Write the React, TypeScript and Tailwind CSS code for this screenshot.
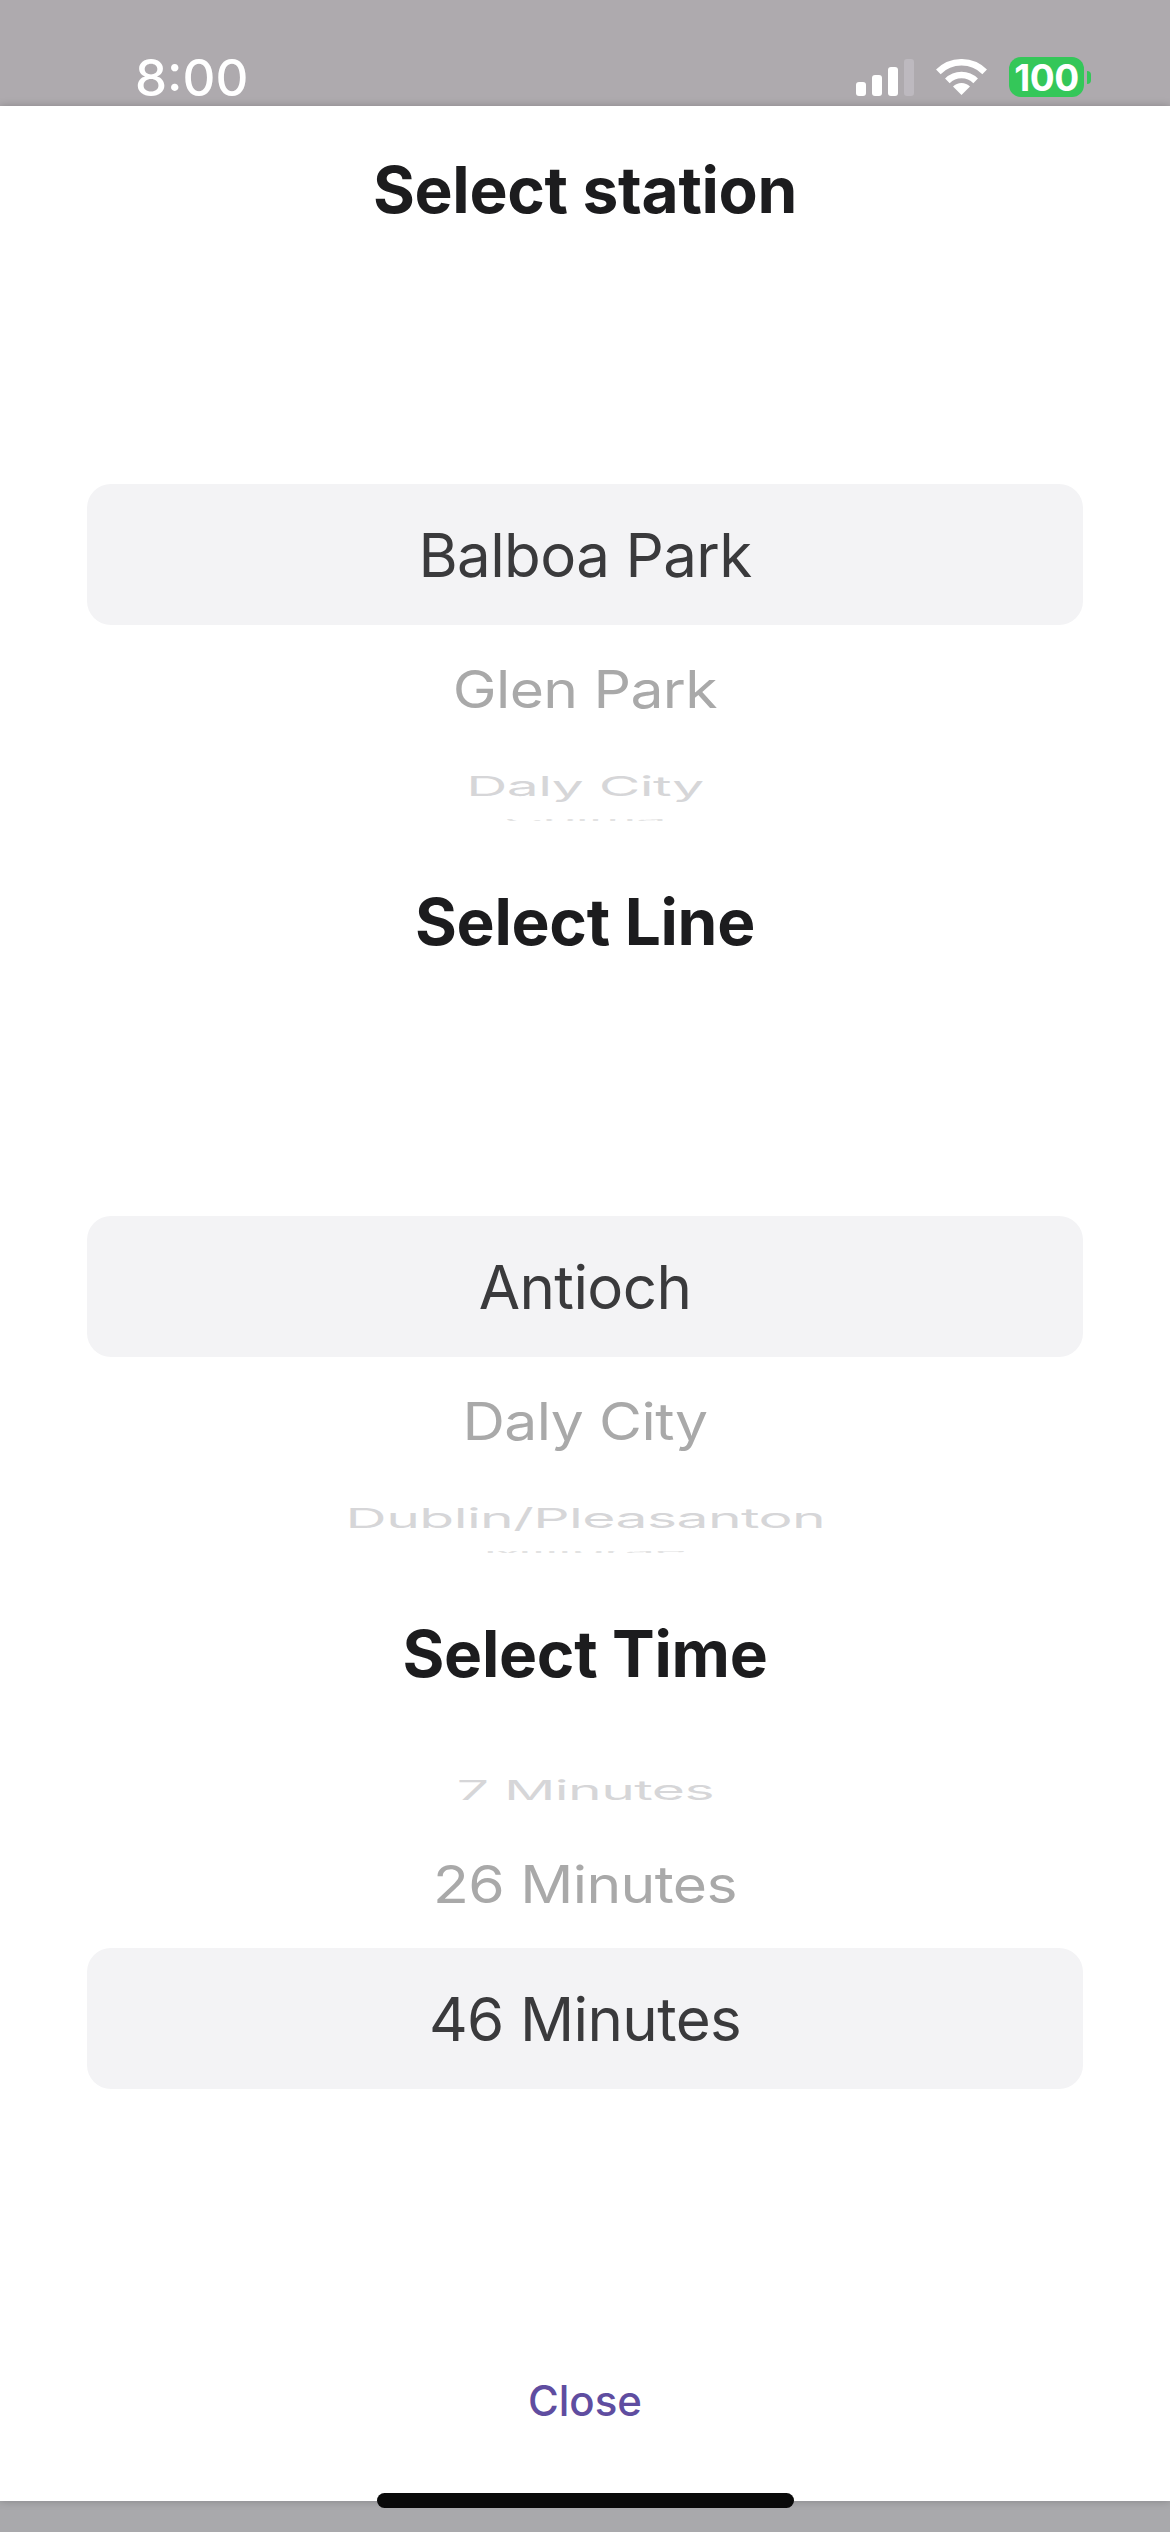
import React from "react";

function Row({ text, size, tall = true }: { text: string; size: 1 | 2; tall?: boolean }) {
  return (
    <div
      className={
        size === 1
          ? "h-[128px] flex items-center justify-center shrink-0"
          : tall
            ? "h-[66px] flex items-center justify-center shrink-0"
            : "h-[60px] flex items-center justify-center shrink-0"
      }
    >
      <span
        className={
          size === 1
            ? "inline-block text-[60px] leading-none tracking-[-0.6px] text-[#a9a9a9] scale-x-[0.98] scale-y-[0.86]"
            : "inline-block text-[60px] leading-none tracking-[-0.6px] text-[#d6d6d8] scale-x-[0.95] scale-y-[0.46]"
        }
      >
        {text}
      </span>
    </div>
  );
}

function Sliver({ text }: { text: string }) {
  return (
    <div className="h-[2px] overflow-hidden flex justify-center shrink-0">
      <span className="inline-block text-[60px] leading-[60px] h-[60px] text-[#e2e2e2] -mt-[30px] scale-x-[0.9] scale-y-[0.12]">{text}</span>
    </div>
  );
}

function Picker({
  title,
  selected,
  above = [],
  below = [],
  sliver,
}: {
  title: string;
  selected: string;
  above?: string[];
  below?: string[];
  sliver?: string;
}) {
  return (
    <section className="h-[732px] shrink-0 flex flex-col">
      <h2 className="h-[168px] flex items-center justify-center text-[64px] leading-none font-bold tracking-[-0.3px] text-[#1c1c1e]">
        {title}
      </h2>
      <div className="mt-[14px] h-[534px] px-[87px] flex flex-col overflow-hidden">
        <div className="h-[196px] shrink-0 flex flex-col justify-end">
          {above[1] && <Row text={above[1]} size={2} tall={false} />}
          {above[0] && <Row text={above[0]} size={1} />}
        </div>
        <div className="h-[141px] shrink-0 rounded-[24px] bg-[#f3f3f5] flex items-center justify-center text-[60px] leading-none tracking-[-0.6px] text-[#3a3a3c]">
          {selected}
        </div>
        <div className="flex flex-col">
          {below[0] && <Row text={below[0]} size={1} />}
          {below[1] && <Row text={below[1]} size={2} />}
          {sliver && <Sliver text={sliver} />}
        </div>
      </div>
    </section>
  );
}

export default function App() {
  return (
    <div className="relative w-[1170px] h-[2532px] overflow-hidden flex flex-col bg-[#a9a9ac] font-['Inter','Liberation_Sans',sans-serif]">
      <header className="h-[106px] shrink-0 bg-[#aeaaae] flex items-end pl-[135px] pr-[79px] pb-[9px] text-white">
        <span className="text-[51px] leading-[38px] font-medium">8:00</span>
        <div className="ml-auto flex items-end">
          <div className="flex items-end gap-[6px] mb-[1px]">
            <div className="w-[10px] h-[14px] rounded-[3px] bg-white" />
            <div className="w-[10px] h-[21px] rounded-[3px] bg-white" />
            <div className="w-[10px] h-[29px] rounded-[3px] bg-white" />
            <div className="w-[10px] h-[37px] rounded-[3px] bg-[#bdb9bf]" />
          </div>
          <svg className="ml-[22px] mb-[1px]" width="51" height="37" viewBox="0 0 51 37" fill="none">
            <path d="M2.34 12.84A32.75 32.75 0 0 1 48.66 12.84" stroke="#fff" strokeWidth="6.5" />
            <path d="M11.36 21.86A20 20 0 0 1 39.64 21.86" stroke="#fff" strokeWidth="6.5" />
            <path d="M25.5 36L17 27.5A12 12 0 0 1 34 27.5Z" fill="#fff" />
          </svg>
          <div className="ml-[22px] w-[75px] h-[40px] rounded-[12px] bg-[#34c759] flex items-center justify-center text-[37px] leading-none font-bold tracking-[-0.5px]">
            100
          </div>
          <div className="ml-[3px] mb-[13px] w-[4px] h-[13px] rounded-r-[4px] bg-[#34c759]" />
        </div>
      </header>
      <main className="h-[2395px] shrink-0 bg-white flex flex-col shadow-[0_0_8px_rgba(0,0,0,0.22)]">
        <Picker title="Select station" selected="Balboa Park" below={["Glen Park", "Daly City"]} sliver="Colma" />
        <Picker title="Select Line" selected="Antioch" below={["Daly City", "Dublin/Pleasanton"]} sliver="Millbrae" />
        <Picker title="Select Time" selected="46 Minutes" above={["26 Minutes", "7 Minutes"]} />
        <button className="mt-auto mb-[70px] h-[60px] text-[42px] leading-none font-medium text-[#5f4da0]">Close</button>
      </main>
      <div className="absolute left-[377px] top-[2493px] w-[417px] h-[15px] rounded-[8px] bg-[#0a0a0a]" />
    </div>
  );
}
